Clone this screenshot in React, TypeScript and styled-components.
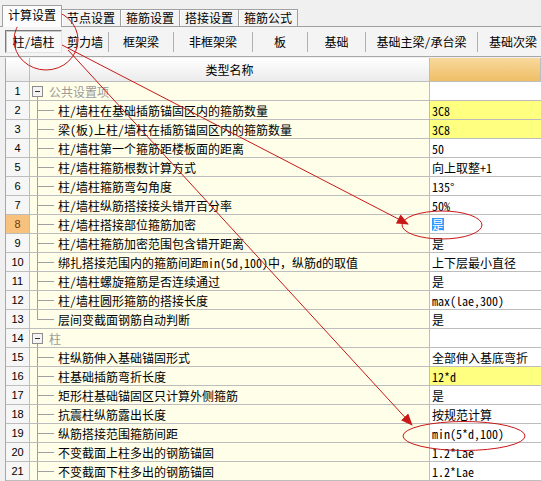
import React from "react";
import styled, { createGlobalStyle, css } from "styled-components";

const GlobalStyle = createGlobalStyle`
  html, body { margin: 0; padding: 0; }
  body {
    width: 541px;
    height: 481px;
    overflow: hidden;
    background: #f0f0f0;
    font-family: "Noto Sans Mono CJK SC", "Noto Sans CJK SC", "DejaVu Sans", sans-serif;
    font-size: 12px;
    color: #000;
  }
`;

const Window = styled.div`
  position: relative;
  width: 541px;
  height: 481px;
  overflow: hidden;
  display: flex;
  flex-direction: column;
`;

const TabStrip = styled.div`
  height: 28px;
  display: flex;
  align-items: flex-end;
  padding-left: 2px;
`;

const Tab = styled.div<{ $active?: boolean }>`
  box-sizing: border-box;
  padding: 0 5px;
  border: 1px solid #a0a0a0;
  border-bottom: none;
  display: flex;
  align-items: center;
  line-height: 1;
  white-space: nowrap;
  ${(p) =>
    p.$active
      ? css`
          height: 22px;
          margin-bottom: -1px;
          padding-bottom: 3px;
          background: #fcfcfc;
          position: relative;
          z-index: 1;
        `
      : css`
          height: 17px;
          margin-left: -1px;
          background: #f3f3f3;
          box-shadow: inset 1px 1px #fff;
        `}
`;

const Panel = styled.div`
  flex: 1;
  border-top: 1px solid #a0a0a0;
  display: flex;
  flex-direction: column;
`;

const SubBar = styled.div`
  box-sizing: border-box;
  height: 30px;
  padding-left: 5px;
  border-bottom: 1px solid #a8a8a8;
  background: #f4f4f4;
  display: flex;
  align-items: center;
`;

const SubTab = styled.div<{ $w: number; $pressed?: boolean }>`
  box-sizing: border-box;
  width: ${(p) => p.$w}px;
  flex: none;
  height: 23px;
  display: flex;
  align-items: center;
  justify-content: center;
  white-space: nowrap;
  ${(p) =>
    p.$pressed &&
    css`
      border: 1px solid;
      border-color: #7c7c7c #e4e4e4 #e4e4e4 #7c7c7c;
      background: #f9f9f9;
      box-shadow: inset 1px 1px #c8c8c8;
    `}
`;

const SubSep = styled.div`
  width: 1px;
  height: 20px;
  flex: none;
  background: #b0b0b0;
`;

const GridWrap = styled.div`
  margin-top: 1px;
  padding-left: 5px;
`;

const Grid = styled.div`
  border-left: 1px solid #a8a8a8;
  background: #fff;
`;

const Row = styled.div<{ $h: number }>`
  display: grid;
  grid-template-columns: 24px 400px 1fr;
  height: ${(p) => p.$h}px;
`;

const cellBase = css`
  box-sizing: border-box;
  border-right: 1px solid #bdbdbd;
  border-bottom: 1px solid #bdbdbd;
  display: flex;
  align-items: center;
  white-space: nowrap;
  overflow: hidden;
`;

const HeadCell = styled.div<{ $orange?: boolean }>`
  ${cellBase}
  justify-content: center;
  background: ${(p) =>
    p.$orange
      ? "linear-gradient(#f8d99c, #efbe66)"
      : "linear-gradient(#ffffff, #ebebeb)"};
`;

const NumCell = styled.div<{ $hot?: boolean }>`
  ${cellBase}
  justify-content: center;
  font-family: "Liberation Sans", "DejaVu Sans", sans-serif;
  font-size: 11px;
  background: ${(p) => (p.$hot ? "#f8c27e" : "#f6f6f6")};
  color: ${(p) => (p.$hot ? "#7a3a00" : "#000")};
`;

type Kind = "group" | "child" | "last";

const NameCell = styled.div<{ $kind: Kind }>`
  ${cellBase}
  position: relative;
  background: #fffee8;
  padding-left: ${(p) => (p.$kind === "group" ? 19 : 28)}px;
  color: ${(p) => (p.$kind === "group" ? "#9a9a9a" : "#000")};

  &::before {
    content: "";
    position: absolute;
    left: 7px;
    width: 1px;
    background: #a0a0a0;
    ${(p) =>
      p.$kind === "group"
        ? css`
            top: 13px;
            bottom: -1px;
          `
        : p.$kind === "last"
        ? css`
            top: 0;
            height: 9px;
          `
        : css`
            top: 0;
            bottom: -1px;
          `}
  }

  &::after {
    content: "";
    position: absolute;
    left: 7px;
    top: 9px;
    width: 17px;
    height: 1px;
    background: #a0a0a0;
    display: ${(p) => (p.$kind === "group" ? "none" : "block")};
  }
`;

const Toggle = styled.span`
  position: absolute;
  left: 2px;
  top: 4px;
  box-sizing: border-box;
  width: 11px;
  height: 11px;
  border: 1px solid #8c8c8c;
  background: #f4f4f4;
  z-index: 1;

  &::after {
    content: "";
    position: absolute;
    left: 2px;
    right: 2px;
    top: 4px;
    height: 1px;
    background: #333;
  }
`;

const ValueCell = styled.div<{ $yellow?: boolean }>`
  ${cellBase}
  border-right: none;
  padding-left: 2px;
  background: ${(p) => (p.$yellow ? "#ffff80" : "#fff")};
`;

const Selected = styled.span`
  background: #3399ff;
  color: #fff;
  line-height: 13px;
`;

const Overlay = styled.svg`
  position: absolute;
  left: 0;
  top: 0;
  pointer-events: none;
`;

type Item = {
  name: string;
  value?: string;
  kind: Kind;
  yellow?: boolean;
  selected?: boolean;
};

const items: Item[] = [
  { name: "公共设置项", kind: "group" },
  { name: "柱/墙柱在基础插筋锚固区内的箍筋数量", value: "3C8", kind: "child", yellow: true },
  { name: "梁(板)上柱/墙柱在插筋锚固区内的箍筋数量", value: "3C8", kind: "child", yellow: true },
  { name: "柱/墙柱第一个箍筋距楼板面的距离", value: "50", kind: "child" },
  { name: "柱/墙柱箍筋根数计算方式", value: "向上取整+1", kind: "child" },
  { name: "柱/墙柱箍筋弯勾角度", value: "135°", kind: "child" },
  { name: "柱/墙柱纵筋搭接接头错开百分率", value: "50%", kind: "child" },
  { name: "柱/墙柱搭接部位箍筋加密", value: "是", kind: "child", selected: true },
  { name: "柱/墙柱箍筋加密范围包含错开距离", value: "是", kind: "child" },
  { name: "绑扎搭接范围内的箍筋间距min(5d,100)中，纵筋d的取值", value: "上下层最小直径", kind: "child" },
  { name: "柱/墙柱螺旋箍筋是否连续通过", value: "是", kind: "child" },
  { name: "柱/墙柱圆形箍筋的搭接长度", value: "max(lae,300)", kind: "child" },
  { name: "层间变截面钢筋自动判断", value: "是", kind: "last" },
  { name: "柱", kind: "group" },
  { name: "柱纵筋伸入基础锚固形式", value: "全部伸入基底弯折", kind: "child" },
  { name: "柱基础插筋弯折长度", value: "12*d", kind: "child", yellow: true },
  { name: "矩形柱基础锚固区只计算外侧箍筋", value: "是", kind: "child" },
  { name: "抗震柱纵筋露出长度", value: "按规范计算", kind: "child" },
  { name: "纵筋搭接范围箍筋间距", value: "min(5*d,100)", kind: "child" },
  { name: "不变截面上柱多出的钢筋锚固", value: "1.2*Lae", kind: "child" },
  { name: "不变截面下柱多出的钢筋锚固", value: "1.2*Lae", kind: "child" },
];

const topTabs = ["计算设置", "节点设置", "箍筋设置", "搭接设置", "箍筋公式"];

const subTabs: { label: string; w: number; sep?: boolean }[] = [
  { label: "柱/墙柱", w: 57 },
  { label: "剪力墙", w: 46 },
  { label: "框架梁", w: 64, sep: true },
  { label: "非框架梁", w: 78, sep: true },
  { label: "板", w: 54, sep: true },
  { label: "基础", w: 57, sep: true },
  { label: "基础主梁/承台梁", w: 111, sep: true },
  { label: "基础次梁", w: 70, sep: true },
];

const RED = "#c81818";

const Annotations = () => (
  <Overlay width={541} height={481} viewBox="0 0 541 481">
    <defs>
      <marker
        id="head"
        markerUnits="userSpaceOnUse"
        markerWidth="12"
        markerHeight="10"
        refX="11"
        refY="5"
        orient="auto"
      >
        <path d="M0 0 L12 5 L0 10 Z" fill={RED} />
      </marker>
    </defs>
    <ellipse cx="46" cy="40" rx="32" ry="30" fill="none" stroke={RED} strokeWidth="1" />
    <ellipse cx="442" cy="225" rx="40" ry="14" fill="none" stroke={RED} strokeWidth="1" />
    <ellipse cx="464" cy="436" rx="61" ry="14.5" fill="none" stroke={RED} strokeWidth="1" />
    <line x1="62" y1="45" x2="408" y2="224" stroke={RED} strokeWidth="1" markerEnd="url(#head)" />
    <line x1="68" y1="50" x2="412" y2="425" stroke={RED} strokeWidth="1" markerEnd="url(#head)" />
  </Overlay>
);

export default function App() {
  return (
    <>
      <GlobalStyle />
      <Window>
        <TabStrip>
          {topTabs.map((t, i) => (
            <Tab key={t} $active={i === 0}>
              {t}
            </Tab>
          ))}
        </TabStrip>
        <Panel>
          <SubBar>
            {subTabs.map((s, i) => (
              <React.Fragment key={s.label}>
                {s.sep && <SubSep />}
                <SubTab $w={s.w} $pressed={i === 0}>
                  {s.label}
                </SubTab>
              </React.Fragment>
            ))}
          </SubBar>
          <GridWrap>
            <Grid>
              <Row $h={24}>
                <HeadCell />
                <HeadCell>类型名称</HeadCell>
                <HeadCell $orange />
              </Row>
              {items.map((it, i) => (
                <Row $h={19} key={i}>
                  <NumCell $hot={i === 7}>{i + 1}</NumCell>
                  <NameCell $kind={it.kind}>
                    {it.kind === "group" && <Toggle />}
                    {it.name}
                  </NameCell>
                  <ValueCell $yellow={it.yellow}>
                    {it.selected ? <Selected>{it.value}</Selected> : it.value}
                  </ValueCell>
                </Row>
              ))}
            </Grid>
          </GridWrap>
        </Panel>
        <Annotations />
      </Window>
    </>
  );
}
